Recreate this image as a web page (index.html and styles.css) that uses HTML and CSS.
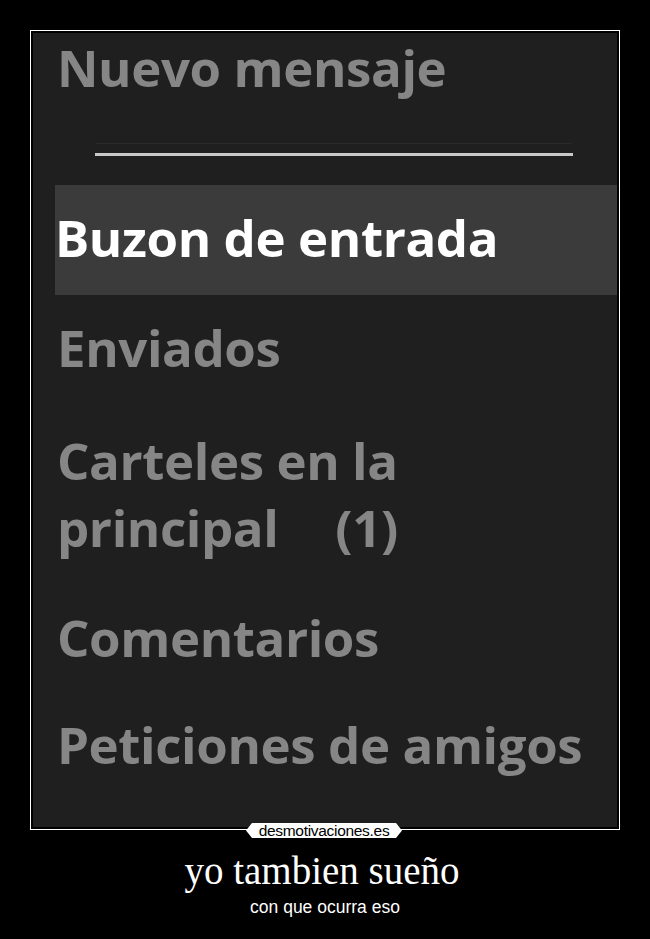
FILE: index.html
```html
<!DOCTYPE html>
<html lang="es">
<head>
    <meta charset="UTF-8">
    <meta name="viewport" content="width=device-width, initial-scale=1.0">
    <title>yo tambien sueño</title>
    <link rel="stylesheet" href="styles.css">
</head>
<body>
    <div class="poster">
        <div class="frame">
            <div class="panel">
                <div class="item item-first">Nuevo mensaje</div>
                <div class="divider"></div>
                <div class="item-active">Buzon de entrada</div>
                <div class="item item-sent">Enviados</div>
                <div class="item item-posters">Carteles en la<br>principal<span class="count">(1)</span></div>
                <div class="item item-comments">Comentarios</div>
                <div class="item item-friends">Peticiones de amigos</div>
            </div>
            <div class="logo">desmotivaciones.es</div>
        </div>
        <h1 class="title">yo tambien sueño</h1>
        <p class="subtitle">con que ocurra eso</p>
    </div>
</body>
</html>
```

FILE: styles.css
```css
* {
    box-sizing: border-box;
}

body {
    margin: 0;
    padding: 0;
    background-color: #000;
}

.poster {
    width: 650px;
    height: 939px;
    padding-top: 30px;
}

.frame {
    position: relative;
    width: 590px;
    height: 800px;
    margin: 0 auto;
    border: 1px solid #fff;
    padding: 2px;
    background: #000;
}

.panel {
    height: 100%;
    background: #1f1f1f;
    padding-top: 1px;
    font-family: "Open Sans", "DejaVu Sans", sans-serif;
    font-weight: 700;
    font-size: 51px;
    letter-spacing: -0.4px;
    line-height: 67px;
    color: #868686;
}

.item {
    padding-left: 24px;
    white-space: nowrap;
}

.divider {
    margin: 52px 0 0 62px;
    width: 478px;
    height: 3px;
    background: #c8c8c8;
    box-shadow: 0 -11px 0 -1px #2a2a2a;
}

.item-active {
    margin: 29px 0 0 22px;
    padding: 19px 0 24px 0;
    background: #3b3b3b;
    color: #fff;
    white-space: nowrap;
}

.item-sent {
    margin-top: 19px;
}

.item-posters {
    margin-top: 46px;
}

.count {
    margin-left: 57px;
}

.item-comments {
    margin-top: 43px;
}

.item-friends {
    margin-top: 40px;
}

.logo {
    position: absolute;
    left: 215px;
    bottom: -9px;
    width: 156px;
    height: 15px;
    background: #fff;
    clip-path: polygon(6px 0, 150px 0, 156px 50%, 150px 100%, 6px 100%, 0 50%);
    font-family: "Liberation Sans", Arial, sans-serif;
    font-size: 15.5px;
    line-height: 15px;
    letter-spacing: -0.3px;
    text-align: center;
    color: #000;
}

.title {
    margin: 20px 0 0 0;
    padding-right: 6px;
    font-family: "Liberation Serif", "Times New Roman", serif;
    font-weight: 400;
    font-size: 39px;
    line-height: 42px;
    color: #fff;
    text-align: center;
}

.subtitle {
    margin: 5px 0 0 0;
    font-family: "Liberation Sans", Arial, sans-serif;
    font-size: 17.5px;
    line-height: 20px;
    color: #fff;
    text-align: center;
}
```
